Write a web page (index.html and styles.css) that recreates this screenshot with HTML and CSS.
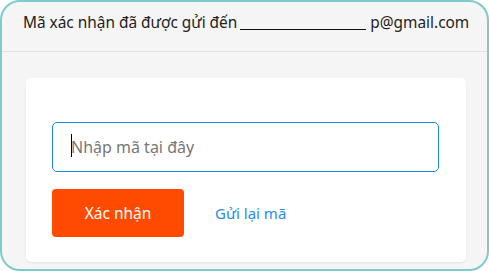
FILE: index.html
```html
<!DOCTYPE html>
<html lang="vi">
<head>
    <meta charset="UTF-8">
    <meta name="viewport" content="width=device-width, initial-scale=1.0">
    <title>Xác nhận</title>
    <link rel="stylesheet" href="styles.css">
</head>
<body>
    <div class="frame">
        <div class="head">
            Mã xác nhận đã được gửi đến <span class="mask"></span> p@gmail.com
        </div>
        <div class="main">
            <div class="card">
                <label class="field">
                    <input type="text" class="code" placeholder="Nhập mã tại đây">
                    <span class="caret"></span>
                </label>
                <div class="actions">
                    <button class="ok">Xác nhận</button>
                    <a class="resend">Gửi lại mã</a>
                </div>
            </div>
        </div>
    </div>
</body>
</html>
```

FILE: styles.css
```css
* {
    margin: 0;
    padding: 0;
    box-sizing: border-box;
    font-family: "Noto Sans", "Open Sans", sans-serif;
}

body {
    width: 489px;
    height: 271px;
    overflow: hidden;
}

.frame {
    width: 489px;
    height: 271px;
    border: 2px solid #7ecbcb;
    border-radius: 20px;
    background-color: #f5f5f5;
    overflow: hidden;
}

.head {
    height: 50px;
    padding: 10px 0 0 21px;
    font-size: 15.4px;
    color: #222;
    border-bottom: 1px solid #e2e2e2;
    white-space: nowrap;
}

.mask {
    display: inline-block;
    width: 126px;
    height: 14px;
    border-bottom: 1px solid #111;
    vertical-align: -2px;
    margin: 0 0 0 -1px;
}

.main {
    padding: 26px 21px 0 24px;
}

.card {
    background-color: #fff;
    border-radius: 5px;
    padding: 44px 27px 25px 26px;
    box-shadow: 0 1px 2px rgba(0, 0, 0, 0.08);
}

.field {
    display: block;
    position: relative;
}

.code {
    display: block;
    width: 100%;
    height: 50px;
    border: 1px solid #1a87e0;
    border-radius: 5px;
    outline: none;
    padding: 0 18px;
    font-size: 16px;
    color: #333;
}

.code::placeholder {
    color: #777;
}

.caret {
    position: absolute;
    left: 19px;
    top: 12px;
    width: 1px;
    height: 23px;
    background-color: #000;
}

.actions {
    display: flex;
    align-items: center;
    margin-top: 17px;
}

.ok {
    width: 132px;
    height: 48px;
    border: none;
    border-radius: 4px;
    background-color: #ff4a00;
    color: #fff;
    font-size: 15.5px;
}

.resend {
    margin-left: 31px;
    font-size: 15px;
    color: #2a8be6;
}
```
